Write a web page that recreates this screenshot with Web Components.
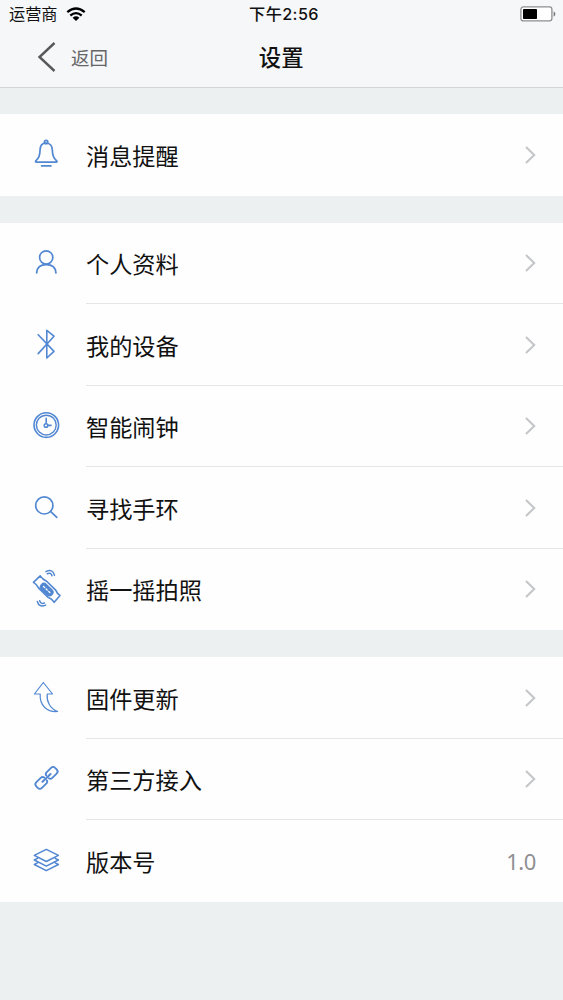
<!DOCTYPE html>
<html lang="zh-CN">
<head>
<meta charset="utf-8">
<title>设置</title>
<style>
html,body{margin:0;height:100%;background:#edf0f1}
body{font-family:"Liberation Sans","Noto Sans CJK SC",sans-serif;overflow:hidden}
</style>
</head>
<body>
<settings-page></settings-page>
<script>
const define = (name, html, setup) => customElements.define(name, class extends HTMLElement {
  connectedCallback() {
    if (this.shadowRoot) return;
    const t = document.createElement('template');
    t.innerHTML = html;
    this.attachShadow({mode: 'open'}).append(t.content.cloneNode(true));
    if (setup) setup(this, this.shadowRoot);
  }
});

const icons = {
  bell: '<path d="M20 8C15.6 8 14 11.5 14 15.5C14 21 12.4 23.6 10 25.6Q8.8 27.2 10.5 27.2H30Q31.8 27.2 30.4 25.6C28 23.6 26.4 21 26.4 15.5C26.4 11.5 24.5 8 20 8Z"/><circle cx="20.1" cy="7" r="1.7"/><path d="M15.7 30.9H24.9"/>',
  person: '<circle cx="20.2" cy="14.4" r="6.6"/><path d="M10.7 29.8C11 25 14.3 21.7 20.3 21.7C26.2 21.7 29.6 25 29.9 29.8" stroke-width="1.8"/>',
  bluetooth: '<path d="M12.2 9.7L28 26.4L20.8 33V5.3L28 11.2L12.2 28.6" stroke-width="1.6"/>',
  clock: '<circle cx="20.3" cy="19.1" r="12.3" stroke-width="1.6"/><circle cx="20.3" cy="19.1" r="9.9" stroke-width="1.4"/><circle cx="20" cy="19.5" r="1.8" stroke-width="1.5"/><path d="M20.2 12.3V17.3M22 19.4H25" stroke-width="1.6"/>',
  search: '<circle cx="18.3" cy="17.4" r="8.6"/><path d="M24.5 23.3L30.8 29.4"/>',
  shake: '<path d="M14.2 6.9Q16.6 10.5 20.6 12.2L29.7 21.1Q31.1 24.6 34 26.4L28.2 33.3Q25.8 29.5 21.9 28.3L12.7 19.1Q10.8 15.2 7.4 13.4Z" stroke-width="1.6"/><g transform="translate(20.7 20.6) rotate(44)"><rect x="-7.4" y="-3.6" width="14.8" height="7.2" rx="3.5" fill="currentColor" stroke-width="1"/><path d="M-4.4 0H-2.8M-.8 0H.8M2.8 0H4.4" stroke="#fff" stroke-width="1.3"/></g><path d="M19.9 2.6Q26.6-.6 28.5 6.3M21.2 4.7Q25 3 26 6.8M11.3 32.5Q13 38.8 19.7 36.1M13.7 31.8Q14.8 35.4 18.4 34" stroke-width="1.5"/>',
  arrow: '<path d="M17.3 4.5L26.5 16H21.2C20.4 23.5 24 30.5 31.6 33.5C21.4 34.4 13.4 27.7 14.2 16H8.4Z" stroke-width="1.2"/>',
  link: '<g transform="translate(20.5 18.9) rotate(-44)" stroke-width="1.8"><path d="M1.4-1.9Q1.8-4 4.2-4H10.2Q13.2-4 13.2-1V1Q13.2 4 10.2 4H4.2Q1.8 4 1.4 1.9M-1.4 1.9Q-1.8 4-4.2 4H-10.2Q-13.2 4-13.2 1V-1Q-13.2-4-10.2-4H-4.2Q-1.8-4-1.4-1.9"/><path d="M-5.6 0H5.6" stroke-width="2"/></g>',
  layers: '<path d="M20.3 8.4L32.4 14.4L20.3 20.5L8.3 14.4ZM11.5 17.3L8.3 19L20.3 25.1L32.4 19L29.2 17.3M11.5 21.8L8.3 23.5L20.3 29.7L32.4 23.5L29.2 21.8" stroke-width="1.5"/>'
};

define('line-icon', `<style>
:host{display:block;width:40px;height:40px;color:#5287d2}
svg{display:block;overflow:visible}
</style><svg width="40" height="40" viewBox="0 0 40 40" fill="none" stroke="currentColor" stroke-width="1.7" stroke-linecap="round" stroke-linejoin="round"></svg>`,
(host, root) => { root.querySelector('svg').innerHTML = icons[host.getAttribute('name')]; });

define('status-bar', `<style>
:host{display:grid;grid-template-columns:1fr auto 1fr;align-items:center;height:28px;padding:0 7px 0 9px;font-size:16.2px;line-height:28px;color:#111}
.left{display:flex;align-items:center;gap:8px}
.time{font-weight:500;font-family:Inter,"Noto Sans CJK SC",sans-serif;letter-spacing:.4px;padding-left:3px}
.battery{justify-self:end}
svg{display:block}
</style>
<div class="left"><span>运营商</span><svg width="20" height="15" viewBox="0 0 20 15" fill="none" stroke="#000" stroke-width="2.3"><path d="M1.3 5.2Q10-2.3 18.7 5.2M4.3 8.5Q10 3.8 15.7 8.5"/><path d="M6.6 10.7Q10 8 13.4 10.7L10 14Z" fill="#000" stroke="none"/></svg></div>
<span class="time">下午2:56</span>
<svg class="battery" width="36" height="16" viewBox="0 0 36 16"><rect x=".9" y=".9" width="31" height="14" rx="2.4" fill="#fff" stroke="#8d8f91" stroke-width="1.3"/><rect x="3" y="3" width="14" height="10" rx=".8"/><path d="M33.6 5.3Q35.4 6.2 35.4 8T33.6 10.7Z" fill="#777"/></svg>`);

define('nav-bar', `<style>
:host{display:grid;grid-template-columns:1fr auto 1fr;align-items:center;height:58px;padding:0 37px 1px 36.5px;border-bottom:1px solid #d2d4d6}
.back{display:flex;align-items:center;gap:14.5px;font-size:18.5px;color:#666}
.title{font-size:22.4px;font-weight:500;color:#111;padding-bottom:3px}
svg{display:block}
</style>
<div class="back"><svg width="20" height="32" viewBox="0 0 20 32" fill="none" stroke="#56595b" stroke-width="2.4"><path d="M17.5 2L2.5 16L17.5 30"/></svg><slot name="back"></slot></div>
<div class="title"><slot></slot></div>`);

define('settings-group', `<style>
:host{display:block;background:#fefefe}
</style><slot></slot>`);

define('settings-row', `<style>
:host{display:flex;height:81.5px;padding-left:26px}
line-icon{align-self:center;margin-right:20px}
.body{flex:1;display:flex;align-items:center;justify-content:space-between;padding-right:27px;box-sizing:border-box;border-bottom:1px solid #e5e6e8;font-size:23.2px;color:#111}
:host(:last-child) .body{border-bottom-color:transparent}
.label{padding-top:1px}
.value{font:22px "Noto Sans",sans-serif;letter-spacing:-.4px;color:#8f8f92;padding-top:2px}
svg{display:block}
</style>
<line-icon></line-icon>
<div class="body"><span class="label"><slot></slot></span><span class="value"></span></div>`,
(host, root) => {
  root.querySelector('line-icon').replaceWith(Object.assign(document.createElement('template'), {innerHTML: `<line-icon name="${host.getAttribute('icon')}"></line-icon>`}).content);
  const value = root.querySelector('.value');
  if (host.hasAttribute('value')) value.textContent = host.getAttribute('value');
  else { value.style.padding = '1px 0 0'; value.innerHTML = '<svg width="12" height="20" viewBox="0 0 12 20" fill="none" stroke="#c5c6c9" stroke-width="2.1"><path d="M2 2L10.2 10L2 18"/></svg>'; }
});

define('settings-page', `<style>
:host{display:block;height:1000px;background:#edf0f1}
header{background:#f5f7f9}
main{display:flex;flex-direction:column;gap:27px;padding-top:26px}
</style>
<header><status-bar></status-bar><nav-bar><span slot="back">返回</span>设置</nav-bar></header>
<main>
<settings-group><settings-row icon="bell">消息提醒</settings-row></settings-group>
<settings-group>
<settings-row icon="person">个人资料</settings-row>
<settings-row icon="bluetooth">我的设备</settings-row>
<settings-row icon="clock">智能闹钟</settings-row>
<settings-row icon="search">寻找手环</settings-row>
<settings-row icon="shake">摇一摇拍照</settings-row>
</settings-group>
<settings-group>
<settings-row icon="arrow">固件更新</settings-row>
<settings-row icon="link">第三方接入</settings-row>
<settings-row icon="layers" value="1.0">版本号</settings-row>
</settings-group>
</main>`);
</script>
</body>
</html>
